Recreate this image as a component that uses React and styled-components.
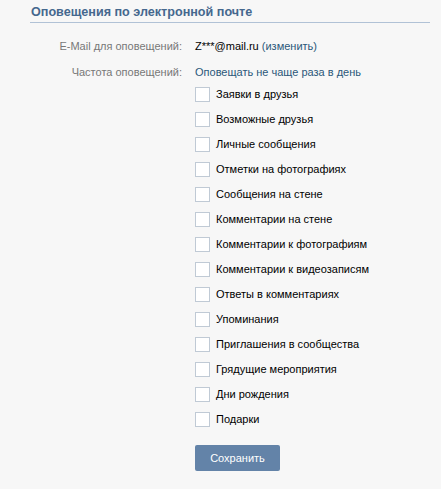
import React from "react";
import styled, { createGlobalStyle } from "styled-components";

const Global = createGlobalStyle`
  html, body { margin: 0; padding: 0; background: #f7f7f7; }
  body { font-family: Tahoma, "Liberation Sans", Arial, sans-serif; font-size: 11px; color: #000; }
`;

const Page = styled.div`
  padding: 1px 11px 0 30px;
  width: 400px;
`;

const Title = styled.h2`
  margin: 0;
  font-size: 12.6px;
  font-weight: bold;
  color: #45688e;
  padding: 4px 0 2px 1px;
  border-bottom: 1px solid #b1c2d6;
  line-height: 15px;
`;

const Form = styled.div`
  display: grid;
  grid-template-columns: 152px 1fr;
  column-gap: 13px;
  row-gap: 11px;
  margin-top: 16px;
  align-items: center;
`;

const Label = styled.div`
  text-align: right;
  color: #777;
  line-height: 15px;
`;

const Value = styled.div`
  line-height: 15px;
`;

const Link = styled.a`
  color: #2b587a;
  text-decoration: none;
`;

const Checks = styled.div`
  grid-column: 2;
  display: flex;
  flex-direction: column;
  gap: 10px;
  margin-top: -4px;
`;

const CheckRow = styled.label`
  display: flex;
  align-items: center;
  gap: 6px;
  height: 15px;
  line-height: 15px;
`;

const Box = styled.span`
  width: 13px;
  height: 13px;
  border: 1px solid #c0cad5;
  background: #fff;
  flex: none;
`;

const Button = styled.button`
  grid-column: 2;
  justify-self: start;
  margin-top: 7px;
  width: 85px;
  height: 26px;
  border: none;
  border-radius: 2px;
  background: #6383a8;
  color: #fff;
  font-family: inherit;
  font-size: 11px;
  padding: 0;
`;

const items = [
  "Заявки в друзья",
  "Возможные друзья",
  "Личные сообщения",
  "Отметки на фотографиях",
  "Сообщения на стене",
  "Комментарии на стене",
  "Комментарии к фотографиям",
  "Комментарии к видеозаписям",
  "Ответы в комментариях",
  "Упоминания",
  "Приглашения в сообщества",
  "Грядущие мероприятия",
  "Дни рождения",
  "Подарки",
];

export default function App() {
  return (
    <Page>
      <Global />
      <Title>Оповещения по электронной почте</Title>
      <Form>
        <Label>E-Mail для оповещений:</Label>
        <Value>
          Z***@mail.ru <Link href="#">(изменить)</Link>
        </Value>
        <Label>Частота оповещений:</Label>
        <Value>
          <Link href="#">Оповещать не чаще раза в день</Link>
        </Value>
        <Checks>
          {items.map((t) => (
            <CheckRow key={t}>
              <Box />
              {t}
            </CheckRow>
          ))}
        </Checks>
        <Button>Сохранить</Button>
      </Form>
    </Page>
  );
}
